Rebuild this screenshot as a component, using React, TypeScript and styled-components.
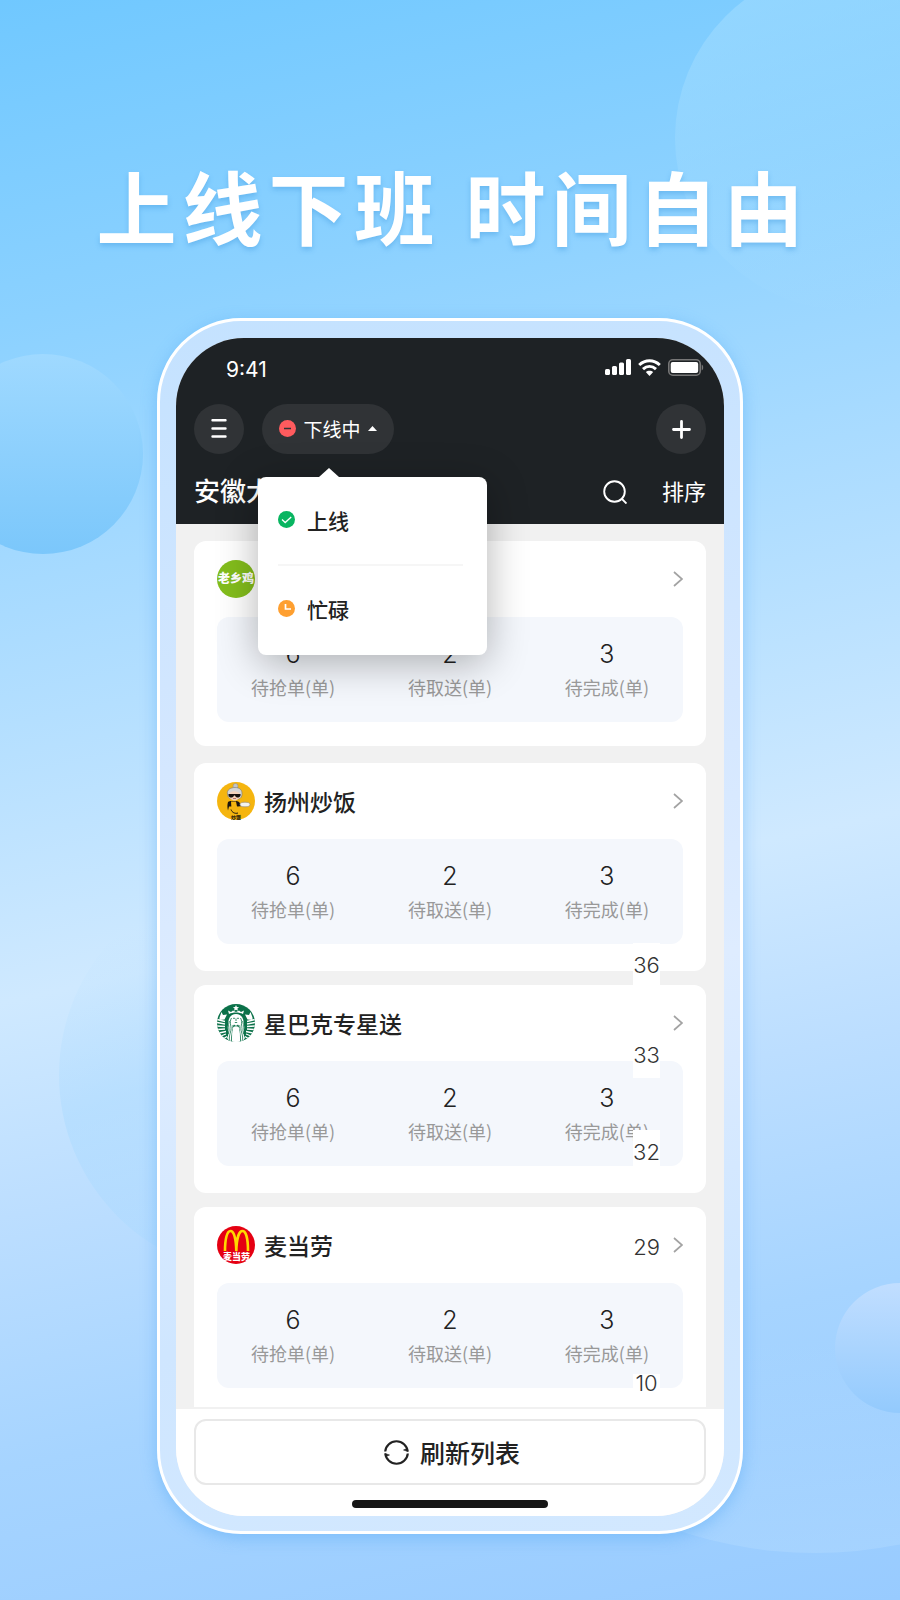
import React from 'react';
import styled, { createGlobalStyle } from 'styled-components';

const GlobalStyle = createGlobalStyle`
  *, *::before, *::after { box-sizing: border-box; }
  body { margin: 0; }
  button { font: inherit; color: inherit; border: 0; padding: 0; background: none; cursor: pointer; }
  h1, h2, p, dl, dd, ul { margin: 0; padding: 0; }
  ul { list-style: none; }
  svg { display: block; flex: none; }
`;

const Poster = styled.main`
  position: relative;
  overflow: hidden;
  min-height: 100vh;
  padding: 150px 24px 66px;
  font-family: Inter, 'Noto Sans CJK SC', sans-serif;
  color: #222;
  background: linear-gradient(168deg, #70c8ff 0%, #8bd1ff 18%, #acdcff 36%, #cfe9ff 56%, #bcdeff 68%, #a6d4ff 82%, #98cbff 100%);
`;

const Bubble = styled.div<{ $size: number; $left: string; $top: number; $fill: string }>`
  position: absolute;
  left: ${p => p.$left};
  top: ${p => p.$top}px;
  width: ${p => p.$size}px;
  height: ${p => p.$size}px;
  border-radius: 50%;
  background: ${p => p.$fill};
`;

const Headline = styled.h1`
  position: relative;
  padding-left: 6px;
  text-align: center;
  font-size: 80px;
  line-height: 120px;
  font-weight: 700;
  letter-spacing: 6px;
  white-space: nowrap;
  color: #fff;
  text-shadow: 0 3px 5px rgba(60, 150, 220, 0.4);
`;

const Phone = styled.section`
  position: relative;
  max-width: 586px;
  margin: 48px auto 0;
  padding: 17px 16px 15px;
  border: 3px solid #fff;
  border-radius: 84px;
  background: linear-gradient(172deg, #c4e2ff 0%, #d4e7ff 35%, #deecff 55%, #cfe6ff 80%, #d2e8ff 100%);
  box-shadow: 0 4px 16px rgba(70, 160, 240, 0.4);
`;

const Screen = styled.div`
  display: flex;
  flex-direction: column;
  overflow: hidden;
  border-radius: 68px;
  background: #f1f1f1;
`;

const Header = styled.header`
  padding: 0 18px;
  color: #fff;
  background: #1e2225;
`;

const StatusBar = styled.div`
  display: flex;
  align-items: center;
  justify-content: space-between;
  height: 60px;
  padding: 2px 2px 0 32px;
  font-size: 21px;
`;

const StatusIcons = styled.div`
  display: flex;
  align-items: center;
  gap: 7px;
  padding-bottom: 4px;
`;

const Toolbar = styled.div`
  position: relative;
  display: flex;
  align-items: center;
  gap: 18px;
  margin-top: 6px;
`;

const RoundButton = styled.button<{ $end?: boolean }>`
  display: grid;
  place-items: center;
  width: 50px;
  height: 50px;
  border-radius: 25px;
  background: #303336;
  margin-left: ${p => (p.$end ? 'auto' : '0')};
`;

const StatusButton = styled.button`
  display: flex;
  align-items: center;
  justify-content: center;
  gap: 7px;
  width: 132px;
  height: 50px;
  padding-bottom: 2px;
  border-radius: 25px;
  font-size: 19px;
  background: #303336;
`;

const TitleRow = styled.div`
  display: flex;
  align-items: center;
  height: 70px;
  padding-top: 6px;
`;

const Place = styled.h2`
  flex: 1;
  font-size: 26px;
  line-height: 38px;
  font-weight: 500;
`;

const SortButton = styled.button`
  margin-left: 35px;
  font-size: 22px;
  line-height: 32px;
`;

const Menu = styled.ul`
  position: absolute;
  z-index: 2;
  left: 64px;
  top: 73px;
  width: 229px;
  padding: 0 24px 2px 20px;
  border-radius: 8px;
  color: #222;
  background: #fff;
  box-shadow: 0 8px 40px rgba(0, 0, 0, 0.3);

  &::before {
    content: '';
    position: absolute;
    left: 61px;
    top: -9px;
    border: solid transparent;
    border-width: 0 10px 9px;
    border-bottom-color: #fff;
  }
`;

const MenuItem = styled.li`
  & + & { border-top: 2px solid #f6f6f6; }
`;

const MenuButton = styled.button`
  display: flex;
  align-items: center;
  gap: 12px;
  width: 100%;
  height: 87px;
  padding-bottom: 2px;
  font-size: 21px;
  font-weight: 500;
`;

const List = styled.div`
  position: relative;
  display: flex;
  flex-direction: column;
  gap: 14px;
  padding: 17px 18px 2px;
`;

const Card = styled.article`
  padding: 19px 23px 27px;
  border-radius: 12px;
  background: #fff;

  &:first-of-type { padding-bottom: 24px; margin-bottom: 3px; }
  &:last-of-type { padding-bottom: 19px; border-radius: 12px 12px 0 0; }
`;

const CardHead = styled.button`
  display: flex;
  align-items: center;
  gap: 9px;
  width: 100%;
  height: 38px;
`;

const ShopName = styled.span`
  flex: 1;
  text-align: left;
  font-size: 23px;
  font-weight: 500;
  white-space: nowrap;
`;

const Stats = styled.dl`
  display: flex;
  justify-content: space-between;
  margin-top: 19px;
  padding: 19px 34px;
  border-radius: 12px;
  background: #f4f7fc;
`;

const Stat = styled.div`
  display: flex;
  flex-direction: column-reverse;
  align-items: center;
`;

const StatLabel = styled.dt`
  font-family: 'Noto Sans CJK SC', sans-serif;
  font-size: 18px;
  line-height: 31px;
  font-weight: 400;
  white-space: nowrap;
  color: #999;
`;

const StatValue = styled.dd`
  font-size: 25px;
  line-height: 36px;
  font-weight: 300;
`;

const IndexMark = styled.span<{ $top: number; $height: number }>`
  position: absolute;
  right: 64px;
  top: ${p => p.$top}px;
  display: flex;
  align-items: center;
  justify-content: center;
  width: 27px;
  height: ${p => p.$height}px;
  font-size: 22px;
  line-height: 18px;
  font-weight: 300;
  color: #333;
  background: #fff;
`;

const Footer = styled.footer`
  display: flex;
  flex-direction: column;
  align-items: center;
  padding: 10px 18px 8px;
  background: #fff;
`;

const RefreshButton = styled.button`
  display: flex;
  align-items: center;
  justify-content: center;
  gap: 11px;
  width: 100%;
  height: 66px;
  padding-left: 4px;
  border: 2px solid #e8e8e8;
  border-radius: 12px;
  font-size: 25px;
  font-weight: 500;
`;

const HomeBar = styled.div`
  width: 196px;
  height: 8px;
  margin-top: 15px;
  border-radius: 4px;
  background: #161616;
`;

const LogoText = styled.text`
  font-family: 'Noto Sans CJK SC', sans-serif;
  font-weight: 900;
  text-anchor: middle;
`;

const LaoxiangjiLogo = () => (
  <svg width="38" height="38" viewBox="0 0 38 38" aria-hidden="true">
    <circle cx="19" cy="19" r="19" fill="#83bd1c" />
    <LogoText x="19" y="23" fontSize="12" fill="#fff">老乡鸡</LogoText>
  </svg>
);

const FriedRiceLogo = () => (
  <svg width="38" height="38" viewBox="0 0 38 38" aria-hidden="true">
    <circle cx="19" cy="19" r="19" fill="#f5b50f" />
    <circle cx="18.500" cy="4" r="2.500" fill="#c4c4c4" stroke="#888" strokeWidth=".5" />
    <path d="M10.500 12c-1-4 3-6.500 7.500-6.500s7.500 2.500 7 7c0 2-1.500 4-3 4.500h-8c-2-1-3.500-2.500-3.500-5z" fill="#d5d5d5" stroke="#777" strokeWidth=".6" />
    <path d="M12.500 11c3-2.500 6-2.500 10 0v3c0 3-3 4.500-5 4.500s-5-1.500-5-4.500z" fill="#f2d3bd" />
    <path d="M11.500 12h12v1.500c-1 2.800-4.500 2.800-5.500 0h-1c-1 2.800-4.500 2.800-5.500 0z" fill="#17120f" />
    <path d="M16 16.500h3" stroke="#a34c3a" strokeWidth=".7" />
    <path d="M11 20c2-1.500 3-1 6-1s6 .5 6 3l2 .5v1.500l-4 .5H12l-1 4c-.8-3-.8-6 0-8.500z" fill="#191512" />
    <path d="M14 19.500h5l1 5c3 3 1.500 6 0 7.500-3 0-6-2-5.500-5z" fill="#f5b50f" />
    <path d="M14 27.500c1 3 4 4.500 7 3.500" fill="none" stroke="#191512" strokeWidth="1" />
    <ellipse cx="28" cy="22.500" rx="5" ry="2.300" fill="#f3f3ee" stroke="#9c907c" strokeWidth=".7" />
    <LogoText x="19" y="36.500" fontSize="5" fill="#2a1d08">炒饭</LogoText>
  </svg>
);

const StarbucksLogo = () => (
  <svg width="38" height="38" viewBox="0 0 38 38" aria-hidden="true">
    <clipPath id="sirenClip"><circle cx="19" cy="19" r="19" /></clipPath>
    <g clipPath="url(#sirenClip)">
      <rect width="38" height="38" fill="#0b7149" />
      <g fill="none" stroke="#fff" strokeWidth="1.300">
        <path d="M0 15.500l8 2M0 18.500l8 1.500M0 22l8 .5M1 25.500l7-.5M2 29l7-1.500M4 32l5-2M6 35l4-2.500M38 15.500l-8 2M38 18.500l-8 1.500M38 22l-8 .5M37 25.500l-7-.5M36 29l-7-1.500M34 32l-5-2M32 35l-4-2.500" />
      </g>
      <path d="M2.500 13.500l2-5.500 1.500 3 4-.5-2.500 5-5 .5zM35.500 13.500l-2-5.500-1.500 3-4-.5 2.500 5 5 .5z" fill="#fff" />
      <path d="M10 34c3-5 0-8 1-13 0-7 3-11 8-11s8 4 8 11c1 5-2 8 1 13l-4 5H14z" fill="#fff" />
      <g fill="none" stroke="#0b7149" strokeWidth=".8">
        <path d="M14.500 14c-3 5 1 9-1 14-1 4-2 6 0 10M12.300 17c-2 5 1 8-1 13M16 21c0 5-1 8-1.500 12v5M23.500 14c3 5-1 9 1 14 1 4 2 6 0 10M25.700 17c2 5-1 8 1 13M22 21c0 5 1 8 1.500 12v5" />
      </g>
      <path d="M16 24c1.500-2.500 4.500-2.500 6 0l.8 6-.8 8h-6l-.8-8z" fill="#fff" />
      <path d="M17 20.500c1 1.500 3 1.500 4 0l2 4c-1.500-3-6.500-3-8 0z" fill="#0b7149" />
      <path d="M16 14.300h2M20 14.300h2M19 14.500v2.500M17.800 18.500h2.400" stroke="#0b7149" strokeWidth=".8" fill="none" />
      <path d="M11 6.500l3 1.500 2-1.500L19 8l3-1.500L24 8l3-1.500-1 3.500c-4-2-10-2-14 0z" fill="#fff" />
      <path d="M19 1l.9 2 2.200.2-1.700 1.400.5 2.200L19 5.700l-1.900 1.100.5-2.200-1.700-1.400 2.200-.2z" fill="#fff" />
    </g>
  </svg>
);

const McDonaldsLogo = () => (
  <svg width="38" height="38" viewBox="0 0 38 38" aria-hidden="true">
    <circle cx="19" cy="19" r="19" fill="#e50012" />
    <path d="M8 25C8 13 10 5 13.500 5S19 13 19.300 25C19.500 13 22 5 25.500 5S31 13 31 25" fill="none" stroke="#ffd900" strokeWidth="2.600" />
    <LogoText x="19.500" y="34" fontSize="9" fill="#fff">麦当劳</LogoText>
  </svg>
);

const Chevron = () => (
  <svg width="10" height="16" viewBox="0 0 10 16" fill="none" stroke="#a3a3a3" strokeWidth="1.700" aria-hidden="true">
    <path d="M1 1l8 7-8 7" />
  </svg>
);

const shops = [
  { name: '老乡鸡', Logo: LaoxiangjiLogo },
  { name: '扬州炒饭', Logo: FriedRiceLogo },
  { name: '星巴克专星送', Logo: StarbucksLogo },
  { name: '麦当劳', Logo: McDonaldsLogo },
];

const stats = [
  { label: '待抢单(单)', value: 6 },
  { label: '待取送(单)', value: 2 },
  { label: '待完成(单)', value: 3 },
];

const marks = [
  { value: 36, top: 419, height: 43 },
  { value: 33, top: 508, height: 46 },
  { value: 32, top: 606, height: 44 },
  { value: 29, top: 704, height: 38 },
  { value: 10, top: 850, height: 18 },
];

export default function App() {
  return (
    <>
      <GlobalStyle />
      <Poster>
        <Bubble $size={344} $left="75%" $top={-34} $fill="linear-gradient(160deg, rgba(170,224,255,.55), rgba(140,210,255,0) 90%)" />
        <Bubble $size={200} $left="-57px" $top={354} $fill="linear-gradient(180deg, #9fd9ff, #7bc7fb)" />
        <Bubble $size={400} $left="59px" $top={875} $fill="linear-gradient(160deg, rgba(160,215,255,0) 15%, rgba(160,215,255,.35) 45%, rgba(160,215,255,.1))" />
        <Bubble $size={850} $left="390px" $top={703} $fill="linear-gradient(180deg, rgba(190,225,255,0) 75%, rgba(190,225,255,.3))" />
        <Bubble $size={130} $left="835px" $top={1283} $fill="linear-gradient(180deg, #c1deff, #93cafd)" />
        <Headline>上线下班 时间自由</Headline>
        <Phone>
          <Screen>
            <Header>
              <StatusBar>
                <span>9:41</span>
                <StatusIcons aria-hidden="true">
                  <svg width="26" height="16" viewBox="0 0 26 16" fill="#fff">
                    <rect y="10" width="5" height="6" rx="1.500" />
                    <rect x="7" y="7" width="5" height="9" rx="1.500" />
                    <rect x="14" y="3.500" width="5" height="12.500" rx="1.500" />
                    <rect x="21" width="5" height="16" rx="1.500" />
                  </svg>
                  <svg width="23" height="17" viewBox="0 0 23 17" fill="none" stroke="#fff" strokeWidth="3">
                    <path d="M1.200 6c6-5.600 14.600-5.600 20.600 0M5 10.200c4-3.600 9-3.600 13 0" />
                    <path d="M11.500 17L7.800 13c2-1.800 5.400-1.800 7.400 0z" fill="#fff" stroke="none" />
                  </svg>
                  <svg width="36" height="17" viewBox="0 0 36 17">
                    <rect x=".8" y=".8" width="31.400" height="15.400" rx="4" fill="none" stroke="#777" strokeWidth="1.600" />
                    <rect x="2.700" y="3" width="27.500" height="11" rx="2" fill="#fff" />
                    <path d="M33.700 5.500c2 1 2 5 0 6z" fill="#777" />
                  </svg>
                </StatusIcons>
              </StatusBar>
              <Toolbar>
                <RoundButton aria-label="菜单">
                  <svg width="16" height="20" viewBox="0 0 16 20" stroke="#fff" strokeWidth="2.400" strokeLinecap="round">
                    <path d="M1.500 1.200h13M1.500 9.500h13M1.500 17.500h13" />
                  </svg>
                </RoundButton>
                <StatusButton aria-haspopup="menu" aria-expanded="true">
                  <svg width="17" height="17" viewBox="0 0 17 17">
                    <circle cx="8.500" cy="8.500" r="8.500" fill="#ff5b5e" />
                    <path d="M5 8.500h7" stroke="#303336" strokeWidth="1.500" />
                  </svg>
                  下线中
                  <svg width="9" height="5" viewBox="0 0 9 5"><path d="M0 5l4.500-5L9 5z" fill="#fff" /></svg>
                </StatusButton>
                <RoundButton $end aria-label="添加">
                  <svg width="19" height="19" viewBox="0 0 19 19" stroke="#fff" strokeWidth="2.800" strokeLinecap="round">
                    <path d="M9.500 1.500v16M1.500 9.500h16" />
                  </svg>
                </RoundButton>
                <Menu>
                  <MenuItem>
                    <MenuButton>
                      <svg width="17" height="17" viewBox="0 0 17 17" fill="none">
                        <circle cx="8.500" cy="8.500" r="8.500" fill="#09b561" />
                        <path d="M4 8.500l3.200 3 6-5.500" stroke="#fff" strokeWidth="1.300" />
                      </svg>
                      上线
                    </MenuButton>
                  </MenuItem>
                  <MenuItem>
                    <MenuButton>
                      <svg width="17" height="17" viewBox="0 0 17 17" fill="none">
                        <circle cx="8.500" cy="8.500" r="8.500" fill="#fe9f30" />
                        <path d="M7.500 4v5h5.500" stroke="#fff" strokeWidth="1.700" />
                      </svg>
                      忙碌
                    </MenuButton>
                  </MenuItem>
                </Menu>
              </Toolbar>
              <TitleRow>
                <Place>安徽大</Place>
                <button aria-label="搜索">
                  <svg width="24" height="24" viewBox="0 0 24 24" fill="none" stroke="#fff" strokeWidth="1.900">
                    <circle cx="11.500" cy="11.500" r="10.300" />
                    <path d="M18.500 18.500l5 5" />
                  </svg>
                </button>
                <SortButton>排序</SortButton>
              </TitleRow>
            </Header>
            <List>
              {shops.map(({ name, Logo }) => (
                <Card key={name}>
                  <CardHead>
                    <Logo />
                    <ShopName>{name}</ShopName>
                    <Chevron />
                  </CardHead>
                  <Stats>
                    {stats.map(s => (
                      <Stat key={s.label}>
                        <StatLabel>{s.label}</StatLabel>
                        <StatValue>{s.value}</StatValue>
                      </Stat>
                    ))}
                  </Stats>
                </Card>
              ))}
              {marks.map(m => (
                <IndexMark key={m.value} $top={m.top} $height={m.height}>{m.value}</IndexMark>
              ))}
            </List>
            <Footer>
              <RefreshButton>
                <svg width="25" height="25" viewBox="0 0 25 25" fill="none" stroke="#222" strokeWidth="2.200">
                  <path d="M1.200 11.500A11.300 11.300 0 0 1 23.700 11.500M23.800 13.500A11.300 11.300 0 0 1 1.300 13.500" />
                  <path d="M19.500 10l4.500 1.500-1-3zM5.500 15l-4.500-1.500 1 3z" fill="#222" strokeWidth=".6" />
                </svg>
                刷新列表
              </RefreshButton>
              <HomeBar />
            </Footer>
          </Screen>
        </Phone>
      </Poster>
    </>
  );
}
